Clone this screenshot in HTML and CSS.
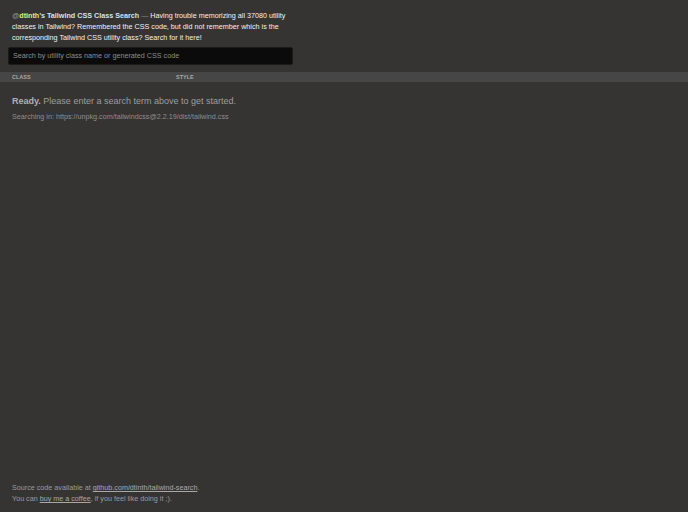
FILE: index.html
```html
<!DOCTYPE html>
<html>
<head>
<meta charset="utf-8">
<link rel="stylesheet" href="styles.css">
</head>
<body>
<div class="page">
  <header class="intro">
    <p class="blurb"><span class="at">@</span><span class="user">dtinth</span><strong class="title">’s Tailwind CSS Class Search</strong> <span class="dash">—</span> Having trouble memorizing all 37080 utility classes in Tailwind? Remembered the CSS code, but did not remember which is the corresponding Tailwind CSS utility class? Search for it here!</p>
    <div class="search">Search by utility class name or generated CSS code</div>
  </header>
  <div class="thead">
    <span class="col-class">Class</span>
    <span class="col-style">Style</span>
  </div>
  <main class="status">
    <p class="ready"><strong>Ready.</strong> Please enter a search term above to get started.</p>
    <p class="source">Searching in: https://unpkg.com/tailwindcss@2.2.19/dist/tailwind.css</p>
  </main>
  <footer class="foot">
    <p>Source code available at <a href="#">github.com/dtinth/tailwind-search</a>.</p>
    <p>You can <a href="#">buy me a coffee</a>, if you feel like doing it ;).</p>
  </footer>
</div>
</body>
</html>
```
FILE: styles.css
```css
html, body {
  margin: 0;
  padding: 0;
  background: #353433;
  height: 100%;
}
body {
  font-family: "Liberation Sans", Arial, sans-serif;
  color: #eee;
}
.page {
  display: flex;
  flex-direction: column;
  height: 512px;
}
.intro {
  padding: 10px 8px 6px 8px;
}
.blurb {
  margin: 0 0 4px 4px;
  width: 280px;
  font-size: 7.2px;
  line-height: 11px;
  color: #f2f2f2;
}
.at { color: #9a9a9a; }
.user { color: #dfee7e; font-weight: bold; }
.title { color: #cfe4f0; }
.dash { color: #8a8a8a; }
.search {
  width: 285px;
  height: 18px;
  box-sizing: border-box;
  padding: 0 4px;
  background: #0b0b0b;
  border: 1px solid #1b1b1b;
  border-radius: 2px;
  font-size: 7.2px;
  line-height: 16px;
  color: #8d8d8d;
}
.thead {
  display: flex;
  background: #464646;
  height: 10px;
  font-size: 5.5px;
  line-height: 10px;
  font-weight: bold;
  text-transform: uppercase;
  color: #a8a8a8;
  margin-top: 1px;
}
.col-class { width: 164px; padding-left: 12px; }
.status {
  padding: 13px 12px;
  flex: 1;
}
.ready {
  margin: 0;
  font-size: 9px;
  line-height: 13px;
  color: #9d9d9d;
}
.ready strong { color: #b0b0b0; }
.source {
  margin: 4px 0 0;
  font-size: 7.2px;
  line-height: 10px;
  color: #8d8d8d;
}
.foot {
  padding: 0 12px 8px;
  font-size: 7.2px;
  line-height: 11px;
  color: #9a9a9a;
}
.foot p { margin: 0; }
.foot a { color: #a8a8a8; text-decoration: underline; }
```
